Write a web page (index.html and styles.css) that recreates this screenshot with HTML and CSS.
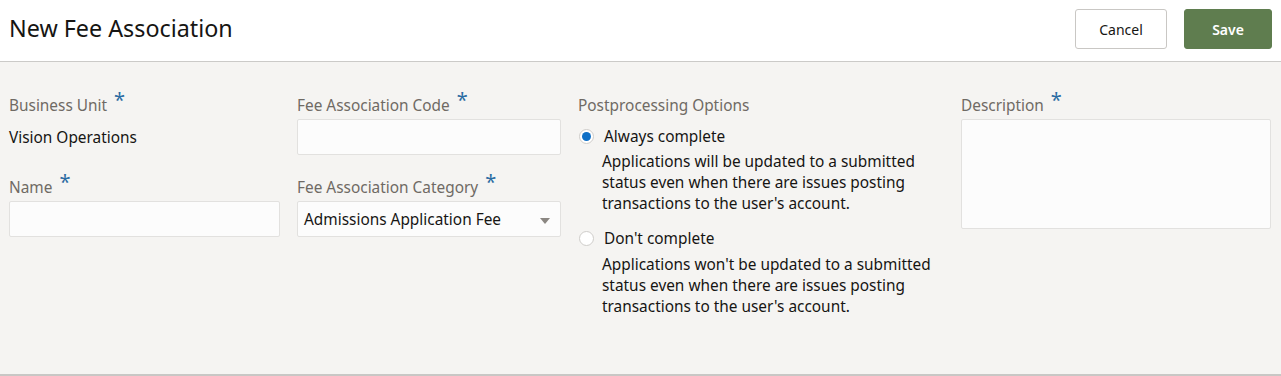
FILE: index.html
```html
<!DOCTYPE html>
<html lang="en">
<head>
    <meta charset="UTF-8">
    <meta name="viewport" content="width=device-width, initial-scale=1.0">
    <title>New Fee Association</title>
    <link rel="stylesheet" href="styles.css">
</head>
<body>

<div class="page">
    <header class="page-header">
        <h1>New Fee Association</h1>
        <div class="actions">
            <button class="btn btn-cancel" type="button">Cancel</button>
            <button class="btn btn-save" type="submit">Save</button>
        </div>
    </header>

    <form class="form-grid" id="feeForm">
        <div class="col">
            <div class="field">
                <label class="field-label">Business Unit <span class="req">*</span></label>
                <div class="read-value">Vision Operations</div>
            </div>
            <div class="field">
                <label class="field-label" for="name">Name <span class="req">*</span></label>
                <input type="text" id="name" class="text-input">
            </div>
        </div>

        <div class="col">
            <div class="field">
                <label class="field-label" for="code">Fee Association Code <span class="req">*</span></label>
                <input type="text" id="code" class="text-input">
            </div>
            <div class="field">
                <label class="field-label" for="category">Fee Association Category <span class="req">*</span></label>
                <div class="select-box" id="category">
                    <span>Admissions Application Fee</span>
                    <span class="caret"></span>
                </div>
            </div>
        </div>

        <div class="col">
            <div class="field-label plain">Postprocessing Options</div>
            <label class="radio-row">
                <span class="radio checked"></span>
                <span class="radio-text">Always complete</span>
            </label>
            <p class="radio-help">Applications will be updated to a submitted status even when there are issues posting transactions to the user's account.</p>
            <label class="radio-row">
                <span class="radio"></span>
                <span class="radio-text">Don't complete</span>
            </label>
            <p class="radio-help second">Applications won't be updated to a submitted status even when there are issues posting transactions to the user's account.</p>
        </div>

        <div class="col">
            <div class="field">
                <label class="field-label" for="description">Description <span class="req">*</span></label>
                <textarea id="description" class="text-area"></textarea>
            </div>
        </div>
    </form>
</div>

</body>
</html>
```

FILE: styles.css
```css
* {
    box-sizing: border-box;
}
body {
    margin: 0;
    font-family: "Noto Sans", "Open Sans", Arial, sans-serif;
    color: #161513;
    background: #fff;
}
.page {
    height: 376px;
    display: flex;
    flex-direction: column;
}
.page-header {
    height: 62px;
    background: #fff;
    border-bottom: 1px solid #cbcac8;
    display: flex;
    align-items: center;
    justify-content: space-between;
    padding: 0 10px 0 9px;
}
.page-header h1 {
    margin: 0 0 6px;
    font-size: 23.3px;
    font-weight: 400;
    color: #161513;
}
.actions {
    display: flex;
    gap: 17px;
    margin-bottom: 3px;
    margin-right: -1px;
}
.btn {
    height: 40px;
    border-radius: 3px;
    font-family: inherit;
    font-size: 14px;
    cursor: pointer;
}
.btn-cancel {
    width: 92px;
    background: #fff;
    border: 1px solid #c9c7c4;
    color: #161513;
}
.btn-save {
    width: 88px;
    background: #5f7d4f;
    border: 1px solid #5f7d4f;
    color: #fff;
    font-weight: 600;
}
.form-grid {
    flex: 1;
    background: #f5f4f2;
    border-bottom: 2px solid #c8c7c5;
    display: grid;
    grid-template-columns: 271px 264px 366px 310px;
    column-gap: 17px;
    padding: 30px 10px 0 9px;
    align-items: start;
}
.field {
    margin-bottom: 19px;
}
.field-label {
    display: block;
    font-size: 15.4px;
    color: #6f6a64;
    line-height: 26px;
    padding-top: 1px;
    height: 27px;
}
.req {
    color: #2b6ca3;
    font-size: 20px;
    position: relative;
    top: -4px;
    margin-left: 3px;
    line-height: 0;
}
.read-value {
    font-size: 15.4px;
    line-height: 20px;
    padding: 9px 0 7px;
}
.text-input, .select-box {
    display: flex;
    align-items: center;
    width: 100%;
    height: 36px;
    background: #fcfcfc;
    border: 1px solid #e2e1df;
    border-radius: 2px;
    font-family: inherit;
    font-size: 15.4px;
    padding: 0 6px;
    margin: 0;
}
.select-box {
    justify-content: space-between;
    padding: 0 10px 0 6px;
    color: #161513;
}
.caret {
    width: 0;
    height: 0;
    border-left: 5px solid transparent;
    border-right: 5px solid transparent;
    border-top: 6px solid #8b8782;
    margin-top: 3px;
}
.text-area {
    display: block;
    width: 100%;
    height: 110px;
    background: #fcfcfc;
    border: 1px solid #e2e1df;
    border-radius: 2px;
    resize: none;
    margin: 0;
}
.plain {
    margin-bottom: 6px;
}
.radio-row {
    display: flex;
    align-items: center;
    gap: 10px;
    padding-left: 1px;
    height: 22px;
}
.radio {
    width: 15px;
    height: 15px;
    border-radius: 50%;
    border: 1px solid #cfcdca;
    background: #fff;
    display: flex;
    align-items: center;
    justify-content: center;
}
.radio.checked::after {
    content: "";
    width: 9px;
    height: 9px;
    border-radius: 50%;
    background: #0f6fc6;
}
.radio-text {
    font-size: 15.4px;
    color: #161513;
}
.radio-help {
    margin: 4px 0 13px 24px;
    font-size: 15.4px;
    line-height: 21px;
    color: #161513;
    width: 335px;
}
.radio-help.second {
    margin-top: 5px;
}
```
